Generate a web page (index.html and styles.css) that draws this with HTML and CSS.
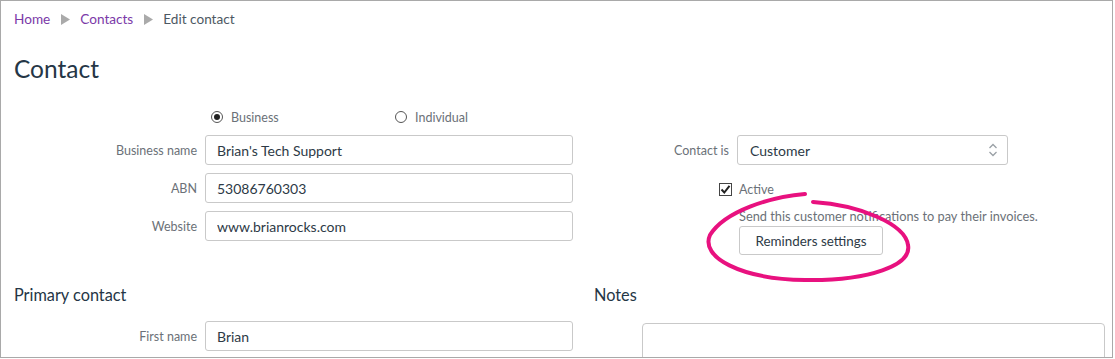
FILE: index.html
```html
<!DOCTYPE html>
<html lang="en">
<head>
  <meta charset="UTF-8">
  <meta name="viewport" content="width=device-width, initial-scale=1.0">
  <title>Edit contact</title>
  <link rel="stylesheet" href="styles.css">
</head>
<body>
  <div class="frame">
    <nav class="crumbs">
      <a href="#">Home</a>
      <svg class="crumb-arrow" width="9" height="11" viewBox="0 0 9 11"><polygon points="0,0 9,5.5 0,11" fill="#aaaaaa"/></svg>
      <a href="#">Contacts</a>
      <svg class="crumb-arrow" width="9" height="11" viewBox="0 0 9 11"><polygon points="0,0 9,5.5 0,11" fill="#aaaaaa"/></svg>
      <span>Edit contact</span>
    </nav>

    <h1 class="page-title">Contact</h1>

    <div class="top-section">
      <div class="form-grid left-col">
        <div></div>
        <div class="radio-row">
          <label class="radio"><span class="radio-dot checked"></span>Business</label>
          <label class="radio"><span class="radio-dot"></span>Individual</label>
        </div>

        <label class="field-label" for="bname">Business name</label>
        <input class="text-input" type="text" id="bname" value="Brian's Tech Support">

        <label class="field-label" for="abn">ABN</label>
        <input class="text-input" type="text" id="abn" value="53086760303">

        <label class="field-label" for="web">Website</label>
        <input class="text-input" type="text" id="web" value="www.brianrocks.com">
      </div>

      <div class="right-col">
        <div class="form-grid contact-grid">
          <label class="field-label">Contact is</label>
          <div class="select-box">
            <span>Customer</span>
            <svg width="10" height="14" viewBox="0 0 10 14"><path d="M1.5 5 L5 1.5 L8.5 5 M1.5 9 L5 12.5 L8.5 9" fill="none" stroke="#9aa0a6" stroke-width="1.3"/></svg>
          </div>
        </div>
        <div class="reminders">
          <label class="check-row">
            <span class="check-box"><svg width="11" height="11" viewBox="0 0 11 11"><path d="M1.5 5.5 L4.3 8.5 L9.5 1.8" fill="none" stroke="#222" stroke-width="2"/></svg></span>
            Active
          </label>
          <p class="hint">Send this customer notifications to pay their invoices.</p>
          <button class="btn" type="button">Reminders settings</button>
        </div>
      </div>
    </div>

    <div class="bottom-section">
      <div class="left-col">
        <h2 class="section-title">Primary contact</h2>
        <div class="form-grid single-row">
          <label class="field-label" for="fname">First name</label>
          <input class="text-input" type="text" id="fname" value="Brian">
        </div>
      </div>
      <div class="notes-col">
        <h2 class="section-title">Notes</h2>
        <textarea class="notes"></textarea>
      </div>
    </div>

    <!-- annotation loop round the reminders button -->
    <svg class="scribble" width="220" height="100" viewBox="0 0 220 100">
      <path d="M105 5 C70 8, 25 22, 10 46 C0 68, 40 90, 105 91 C170 92, 212 76, 208 56 C205 35, 160 16, 113 13" fill="none" stroke="#e8117f" stroke-width="4" stroke-linecap="round"/>
    </svg>
  </div>
</body>
</html>
```

FILE: styles.css
```css
/* Page */
body {
  margin: 0;
  background: #ffffff;
  font-family: Lato, "Open Sans", Arial, sans-serif;
  color: #2d3a46;
}

.frame {
  position: relative;
  width: 1113px;
  height: 358px;
  box-sizing: border-box;
  border: 1px solid #a9a9a9;
  padding: 0 7px 0 13px;
  overflow: hidden;
}

/* Breadcrumb */
.crumbs {
  display: flex;
  align-items: center;
  margin-top: 8px;
  height: 20px;
  font-size: 13.6px;
  color: #4d5863;
}

.crumbs a {
  color: #7b3aa8;
  text-decoration: none;
}

.crumb-arrow {
  margin: 0 10px 0 11px;
}

.page-title {
  margin: 25px 0 0;
  font-size: 24.5px;
  line-height: 30px;
  font-weight: 400;
  color: #253646;
}

/* Form grid */
.form-grid {
  display: grid;
  grid-template-columns: 183px 368px;
  grid-template-rows: 20px repeat(3, 30px);
  column-gap: 8px;
  row-gap: 8px;
  align-items: center;
}

.form-grid.single-row {
  grid-template-rows: 30px;
}

.field-label {
  justify-self: end;
  font-size: 12.5px;
  color: #6b7178;
}

.text-input {
  height: 30px;
  margin: 0;
  box-sizing: border-box;
  border: 1px solid #c9c9c9;
  border-radius: 3px;
  padding: 0 11px;
  font-family: inherit;
  font-size: 14px;
  color: #2d3a46;
}

.top-section {
  display: flex;
  margin-top: 23px;
}

.left-col {
  width: 559px;
}

.right-col {
  margin-left: 21px;
}

/* Radios */
.radio-row {
  display: flex;
  height: 20px;
  align-items: center;
  font-size: 12.5px;
  color: #6b7178;
}

.radio {
  display: flex;
  align-items: center;
  gap: 8px;
  width: 186px;
  margin-left: 6px;
}

.radio-dot {
  width: 12px;
  height: 12px;
  box-sizing: border-box;
  border: 1px solid #555;
  border-radius: 50%;
  position: relative;
}

.radio-dot.checked::after {
  content: "";
  position: absolute;
  left: 2px;
  top: 2px;
  width: 6px;
  height: 6px;
  border-radius: 50%;
  background: #222;
}

/* Right column */
.contact-grid {
  grid-template-columns: 135px 271px;
  grid-template-rows: 30px;
  margin-top: 28px;
}

.select-box {
  display: flex;
  align-items: center;
  justify-content: space-between;
  height: 30px;
  box-sizing: border-box;
  border: 1px solid #c9c9c9;
  border-radius: 3px;
  padding: 0 9px 0 12px;
  font-size: 14px;
}

.reminders {
  margin-left: 145px;
}

.check-row {
  display: flex;
  align-items: center;
  gap: 7px;
  height: 20px;
  margin: 14px 0 0 -20px;
  font-size: 12.5px;
  color: #6b7178;
}

.check-box {
  display: flex;
  align-items: center;
  justify-content: center;
  width: 13px;
  height: 13px;
  box-sizing: border-box;
  border: 1px solid #444;
}

.hint {
  margin: 9px 0 0;
  font-size: 12.8px;
  line-height: 16px;
  color: #6b7178;
}

.btn {
  margin-top: 2px;
  width: 144px;
  height: 29px;
  border: 1px solid #c9c9c9;
  border-radius: 3px;
  background: #ffffff;
  font-family: inherit;
  font-size: 13.4px;
  color: #2d3a46;
}

/* Lower sections */
.bottom-section {
  display: flex;
  margin-top: 30px;
}

.section-title {
  margin: 0 0 16px;
  font-size: 16.3px;
  line-height: 20px;
  font-weight: 400;
  color: #253646;
}

.notes-col {
  margin-left: 21px;
  flex: 1;
}

.notes {
  display: block;
  margin: 18px 0 0 48px;
  width: calc(100% - 48px);
  height: 60px;
  box-sizing: border-box;
  border: 1px solid #c9c9c9;
  border-radius: 4px;
  resize: none;
}

.scribble {
  position: absolute;
  left: 699px;
  top: 188px;
}
```
